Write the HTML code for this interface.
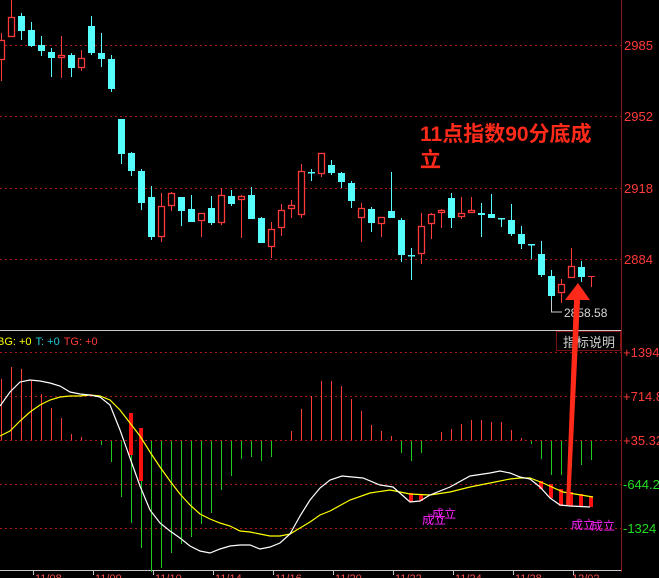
<!DOCTYPE html>
<html><head><meta charset="utf-8"><style>
html,body{margin:0;padding:0;background:#000;overflow:hidden}
svg{display:block}
text{font-family:"Liberation Sans","Noto Sans CJK SC",sans-serif}
</style></head><body>
<svg width="659" height="578" viewBox="0 0 659 578" xmlns="http://www.w3.org/2000/svg">
<rect width="659" height="578" fill="#000"/>
<g stroke="#b01818" stroke-dasharray="2 3" stroke-width="1" shape-rendering="crispEdges">
<line x1="0" y1="45.5" x2="621" y2="45.5"/><line x1="0" y1="116.5" x2="621" y2="116.5"/><line x1="0" y1="188.5" x2="621" y2="188.5"/><line x1="0" y1="259.5" x2="621" y2="259.5"/>
<line x1="0" y1="352.5" x2="621" y2="352.5"/><line x1="0" y1="396.5" x2="621" y2="396.5"/><line x1="0" y1="440.5" x2="621" y2="440.5"/><line x1="0" y1="484.5" x2="621" y2="484.5"/><line x1="0" y1="528.5" x2="621" y2="528.5"/>
</g>
<line x1="621.5" y1="0" x2="621.5" y2="572" stroke="#8a1a1a"/>
<line x1="0" y1="330.5" x2="621" y2="330.5" stroke="#c8c8c8"/>
<line x1="0" y1="570.5" x2="621" y2="570.5" stroke="#c8c8c8"/>
<g font-size="13" fill="#ff3a3a">
<text x="624" y="50">2985</text><text x="624" y="121">2952</text><text x="624" y="193">2918</text><text x="624" y="264">2884</text>
<text x="623" y="357">+1394</text><text x="623" y="401">+714.8</text><text x="623" y="445">+35.32</text>
<text x="623" y="489" fill="#22dd22">-644.2</text><text x="623" y="533" fill="#22dd22">-1324</text>
</g>
<g stroke-width="1" shape-rendering="crispEdges">
<g stroke="#ff3a3a">
<line x1="1.5" y1="33" x2="1.5" y2="81"/><line x1="11.5" y1="0" x2="11.5" y2="37"/><line x1="61.5" y1="36" x2="61.5" y2="78"/><line x1="81.5" y1="50" x2="81.5" y2="71"/>
<line x1="161.5" y1="193" x2="161.5" y2="242"/><line x1="171.5" y1="192" x2="171.5" y2="211"/><line x1="201.5" y1="213" x2="201.5" y2="237"/><line x1="221.5" y1="188" x2="221.5" y2="225"/><line x1="241.5" y1="195" x2="241.5" y2="238"/><line x1="271.5" y1="222" x2="271.5" y2="258"/><line x1="281.5" y1="204" x2="281.5" y2="236"/><line x1="291.5" y1="200" x2="291.5" y2="218"/><line x1="301.5" y1="164" x2="301.5" y2="218"/><line x1="321.5" y1="153" x2="321.5" y2="177"/>
<line x1="361.5" y1="203" x2="361.5" y2="242"/><line x1="381.5" y1="217" x2="381.5" y2="237"/><line x1="421.5" y1="213" x2="421.5" y2="264"/><line x1="431.5" y1="213" x2="431.5" y2="239"/><line x1="441.5" y1="209" x2="441.5" y2="228"/><line x1="461.5" y1="197" x2="461.5" y2="219"/><line x1="471.5" y1="197" x2="471.5" y2="213"/>
<line x1="561.5" y1="279" x2="561.5" y2="303"/><line x1="571.5" y1="248" x2="571.5" y2="278"/><line x1="591.5" y1="276" x2="591.5" y2="287"/><line x1="588" y1="276.5" x2="595" y2="276.5"/>
</g>
<g stroke="#55ffff">
<line x1="21.5" y1="13" x2="21.5" y2="40"/><line x1="31.5" y1="22" x2="31.5" y2="47"/><line x1="41.5" y1="36" x2="41.5" y2="56"/><line x1="51.5" y1="48" x2="51.5" y2="77"/><line x1="71.5" y1="53" x2="71.5" y2="77"/><line x1="91.5" y1="16" x2="91.5" y2="55"/><line x1="101.5" y1="33" x2="101.5" y2="67"/><line x1="111.5" y1="55" x2="111.5" y2="92"/>
<line x1="121.5" y1="119" x2="121.5" y2="164"/><line x1="131.5" y1="152" x2="131.5" y2="176"/><line x1="141.5" y1="169" x2="141.5" y2="210"/><line x1="151.5" y1="186" x2="151.5" y2="240"/><line x1="181.5" y1="197" x2="181.5" y2="226"/><line x1="191.5" y1="195" x2="191.5" y2="222"/><line x1="211.5" y1="196" x2="211.5" y2="225"/><line x1="231.5" y1="190" x2="231.5" y2="206"/><line x1="251.5" y1="187" x2="251.5" y2="219"/><line x1="261.5" y1="217" x2="261.5" y2="243"/><line x1="311.5" y1="169" x2="311.5" y2="181"/>
<line x1="331.5" y1="160" x2="331.5" y2="175"/><line x1="341.5" y1="172" x2="341.5" y2="188"/><line x1="351.5" y1="181" x2="351.5" y2="208"/><line x1="371.5" y1="207" x2="371.5" y2="232"/><line x1="391.5" y1="172" x2="391.5" y2="218"/><line x1="401.5" y1="218" x2="401.5" y2="262"/><line x1="411.5" y1="248" x2="411.5" y2="280"/><line x1="451.5" y1="193" x2="451.5" y2="228"/><line x1="481.5" y1="203" x2="481.5" y2="237"/><line x1="491.5" y1="194" x2="491.5" y2="218"/><line x1="501.5" y1="218" x2="501.5" y2="227"/><line x1="511.5" y1="204" x2="511.5" y2="236"/><line x1="521.5" y1="226" x2="521.5" y2="249"/><line x1="531.5" y1="244" x2="531.5" y2="259"/><line x1="541.5" y1="241" x2="541.5" y2="277"/><line x1="551.5" y1="270" x2="551.5" y2="300"/><line x1="581.5" y1="261" x2="581.5" y2="282"/>
</g>
</g>
<g fill="#000" stroke="#ff3a3a" stroke-width="1.3">
<rect x="-1.5" y="40.5" width="6" height="19"/><rect x="8.5" y="17.5" width="6" height="19"/><rect x="58.5" y="55.5" width="6" height="2"/><rect x="78.5" y="58.5" width="6" height="9"/>
<rect x="158.5" y="206.5" width="6" height="30"/><rect x="168.5" y="193.5" width="6" height="12"/><rect x="198.5" y="213.5" width="6" height="7"/><rect x="218.5" y="195.5" width="6" height="27"/><rect x="238.5" y="196.5" width="6" height="3"/><rect x="268.5" y="229.5" width="6" height="17"/><rect x="278.5" y="210.5" width="6" height="17"/><rect x="288.5" y="205.5" width="6" height="3"/><rect x="298.5" y="171.5" width="6" height="43"/><rect x="318.5" y="153.5" width="6" height="20"/>
<rect x="358.5" y="208.5" width="6" height="9"/><rect x="378.5" y="217.5" width="6" height="6"/><rect x="418.5" y="226.5" width="6" height="27"/><rect x="428.5" y="214.5" width="6" height="9"/><rect x="438.5" y="210.5" width="6" height="2"/><rect x="458.5" y="213.5" width="6" height="3"/><rect x="468.5" y="210.5" width="6" height="2"/>
<rect x="558.5" y="284.5" width="6" height="8"/><rect x="568.5" y="266.5" width="6" height="11"/>
</g>
<g fill="#55ffff">
<rect x="18" y="16" width="7" height="15"/><rect x="28" y="30" width="7" height="16"/><rect x="38" y="45" width="7" height="6"/><rect x="48" y="52" width="7" height="6"/><rect x="68" y="55" width="7" height="13"/><rect x="88" y="26" width="7" height="27"/><rect x="98" y="53" width="7" height="6"/><rect x="108" y="59" width="7" height="30"/>
<rect x="118" y="119" width="7" height="35"/><rect x="128" y="153" width="7" height="18"/><rect x="138" y="171" width="7" height="32"/><rect x="148" y="197" width="7" height="40"/><rect x="178" y="197" width="7" height="14"/><rect x="188" y="209" width="7" height="13"/><rect x="208" y="208" width="7" height="15"/><rect x="228" y="196" width="7" height="8"/><rect x="248" y="195" width="7" height="24"/><rect x="258" y="218" width="7" height="25"/><rect x="308" y="172" width="7" height="1.5"/>
<rect x="328" y="165" width="7" height="8"/><rect x="338" y="173" width="7" height="9"/><rect x="348" y="183" width="7" height="18"/><rect x="368" y="209" width="7" height="14"/><rect x="388" y="211" width="7" height="7"/><rect x="398" y="220" width="7" height="35"/><rect x="408" y="255" width="7" height="1.5"/><rect x="448" y="198" width="7" height="20"/><rect x="478" y="213" width="7" height="2"/><rect x="488" y="214" width="7" height="4"/><rect x="498" y="218" width="7" height="1.5"/><rect x="508" y="220" width="7" height="14"/><rect x="518" y="234" width="7" height="10"/><rect x="528" y="244" width="7" height="1.5"/><rect x="538" y="254" width="7" height="21"/><rect x="548" y="276" width="7" height="20"/><rect x="578" y="267" width="7" height="10"/>
</g>
<polyline points="551.5,300 551.5,312 562,312" fill="none" stroke="#cccccc"/>
<text x="564" y="317" font-size="12" fill="#d8d8d8">2858.58</text>
<text x="420" y="141" font-size="21" font-weight="bold" fill="#ff2a1a">11点指数90分底成</text>
<text x="420" y="167" font-size="21" font-weight="bold" fill="#ff2a1a">立</text>
<rect x="556.5" y="331.5" width="64" height="19" fill="#000" stroke="#7a1010"/>
<text x="563" y="347" font-size="13" fill="#d0d0d0">指标说明</text>
<text x="-3" y="345" font-size="11"><tspan fill="#ffff00">BG: +0</tspan><tspan fill="#22ccdd" dx="4">T: +0</tspan><tspan fill="#ff3a3a" dx="4">TG: +0</tspan></text>
<g stroke-width="1" shape-rendering="crispEdges">
<g stroke="#ff3c3c">
<line x1="1.5" y1="379" x2="1.5" y2="440"/><line x1="11.5" y1="367" x2="11.5" y2="440"/><line x1="21.5" y1="369" x2="21.5" y2="440"/><line x1="31.5" y1="381" x2="31.5" y2="440"/><line x1="41.5" y1="394" x2="41.5" y2="440"/><line x1="51.5" y1="408" x2="51.5" y2="440"/><line x1="61.5" y1="418" x2="61.5" y2="440"/><line x1="71.5" y1="434" x2="71.5" y2="440"/><line x1="81.5" y1="437" x2="81.5" y2="440"/>
<line x1="291.5" y1="431" x2="291.5" y2="440"/><line x1="301.5" y1="409" x2="301.5" y2="440"/><line x1="311.5" y1="396" x2="311.5" y2="440"/><line x1="321.5" y1="381" x2="321.5" y2="440"/><line x1="331.5" y1="381" x2="331.5" y2="440"/><line x1="341.5" y1="386" x2="341.5" y2="440"/><line x1="351.5" y1="399" x2="351.5" y2="440"/><line x1="361.5" y1="411" x2="361.5" y2="440"/><line x1="371.5" y1="425" x2="371.5" y2="440"/><line x1="381.5" y1="431" x2="381.5" y2="440"/><line x1="391.5" y1="436" x2="391.5" y2="440"/>
<line x1="441.5" y1="432" x2="441.5" y2="440"/><line x1="451.5" y1="429" x2="451.5" y2="440"/><line x1="461.5" y1="424" x2="461.5" y2="440"/><line x1="471.5" y1="420" x2="471.5" y2="440"/><line x1="481.5" y1="420" x2="481.5" y2="440"/><line x1="491.5" y1="422" x2="491.5" y2="440"/><line x1="501.5" y1="422" x2="501.5" y2="440"/><line x1="511.5" y1="430" x2="511.5" y2="440"/><line x1="521.5" y1="438" x2="521.5" y2="440"/>
</g>
<g stroke="#1ecc1e">
<line x1="101.5" y1="441" x2="101.5" y2="445"/><line x1="111.5" y1="441" x2="111.5" y2="462"/><line x1="121.5" y1="441" x2="121.5" y2="497"/><line x1="131.5" y1="441" x2="131.5" y2="523"/><line x1="141.5" y1="441" x2="141.5" y2="548"/><line x1="151.5" y1="441" x2="151.5" y2="572"/><line x1="161.5" y1="441" x2="161.5" y2="568"/><line x1="171.5" y1="441" x2="171.5" y2="553"/><line x1="181.5" y1="441" x2="181.5" y2="544"/><line x1="191.5" y1="441" x2="191.5" y2="537"/><line x1="201.5" y1="441" x2="201.5" y2="524"/><line x1="211.5" y1="441" x2="211.5" y2="513"/><line x1="221.5" y1="441" x2="221.5" y2="490"/><line x1="231.5" y1="441" x2="231.5" y2="476"/><line x1="241.5" y1="441" x2="241.5" y2="459"/><line x1="251.5" y1="441" x2="251.5" y2="457"/><line x1="261.5" y1="441" x2="261.5" y2="461"/><line x1="271.5" y1="441" x2="271.5" y2="457"/>
<line x1="401.5" y1="441" x2="401.5" y2="453"/><line x1="411.5" y1="441" x2="411.5" y2="461"/><line x1="421.5" y1="441" x2="421.5" y2="453"/>
<line x1="531.5" y1="441" x2="531.5" y2="444"/><line x1="541.5" y1="441" x2="541.5" y2="459"/><line x1="551.5" y1="441" x2="551.5" y2="475"/><line x1="561.5" y1="441" x2="561.5" y2="475"/><line x1="571.5" y1="441" x2="571.5" y2="467"/><line x1="581.5" y1="441" x2="581.5" y2="465"/><line x1="591.5" y1="441" x2="591.5" y2="460"/>
</g>
</g>
<g fill="#ff1010">
<rect x="129" y="413" width="4" height="42"/><rect x="139" y="428" width="4" height="53"/>
<rect x="409" y="493" width="4" height="9"/><rect x="419" y="495" width="4" height="6"/>
<rect x="539" y="481" width="4" height="8"/><rect x="549" y="484" width="4" height="14"/><rect x="559" y="489" width="4" height="17"/><rect x="569" y="492" width="4" height="14"/><rect x="579" y="494" width="4" height="13"/><rect x="589" y="497" width="4" height="10"/>
</g>
<polyline fill="none" stroke="#ffff00" stroke-width="1.2" points="0,436 10,431 20,421 30,412 40,405 50,400 60,397 70,396 80,396 90,395 100,396 110,400 120,410 130,423 140,436 150,452 160,467 170,481 180,494 190,505 200,514 210,519 220,523 230,526 240,531 250,532 260,534 270,536 280,536 290,534 300,528 310,522 320,515 330,511 350,500 370,493 390,490 410,494 430,495 450,492 470,487 490,483 510,479 520,478 530,478 543,483 563,492 593,497"/>
<polyline fill="none" stroke="#ffffff" stroke-width="1.2" points="0,406 10,392 20,382 30,380 40,381 50,383 60,386 70,392 80,394 90,395 100,397 110,405 120,430 130,458 140,486 150,510 160,523 170,531 180,538 190,546 200,551 210,553 220,549 230,546 240,545 250,545 260,549 270,547 280,543 290,534 300,516 310,500 320,488 330,480 342,476 363,478 380,485 393,487 410,502 420,501 430,495 450,487 470,476 490,473 500,471 510,473 520,477 530,479 540,487 550,498 560,505 570,506 590,507"/>
<g font-size="12" fill="#ff22ff">
<text x="432" y="518">成立</text><text x="422" y="524">成立</text>
<text x="571" y="529">成立</text><text x="591" y="530">成立</text>
</g>
<polygon points="566,505 570,505 580,300 574,300" fill="#ff2a1a"/>
<polygon points="565,300 578,283 590,300" fill="#ff2a1a"/>
<g stroke="#c8c8c8"><line x1="33.5" y1="571" x2="33.5" y2="575"/><line x1="93.5" y1="571" x2="93.5" y2="575"/><line x1="153.5" y1="571" x2="153.5" y2="575"/><line x1="213.5" y1="571" x2="213.5" y2="575"/><line x1="273.5" y1="571" x2="273.5" y2="575"/><line x1="333.5" y1="571" x2="333.5" y2="575"/><line x1="393.5" y1="571" x2="393.5" y2="575"/><line x1="453.5" y1="571" x2="453.5" y2="575"/><line x1="513.5" y1="571" x2="513.5" y2="575"/><line x1="573.5" y1="571" x2="573.5" y2="575"/></g>
<g font-size="11" fill="#ff5050">
<text x="35" y="582">11/08</text><text x="95" y="582">11/09</text><text x="155" y="582">11/10</text><text x="215" y="582">11/14</text><text x="275" y="582">11/16</text><text x="335" y="582">11/20</text><text x="395" y="582">11/22</text><text x="455" y="582">11/24</text><text x="515" y="582">11/28</text><text x="572" y="582">12/02</text>
</g>
</svg>
</body></html>
